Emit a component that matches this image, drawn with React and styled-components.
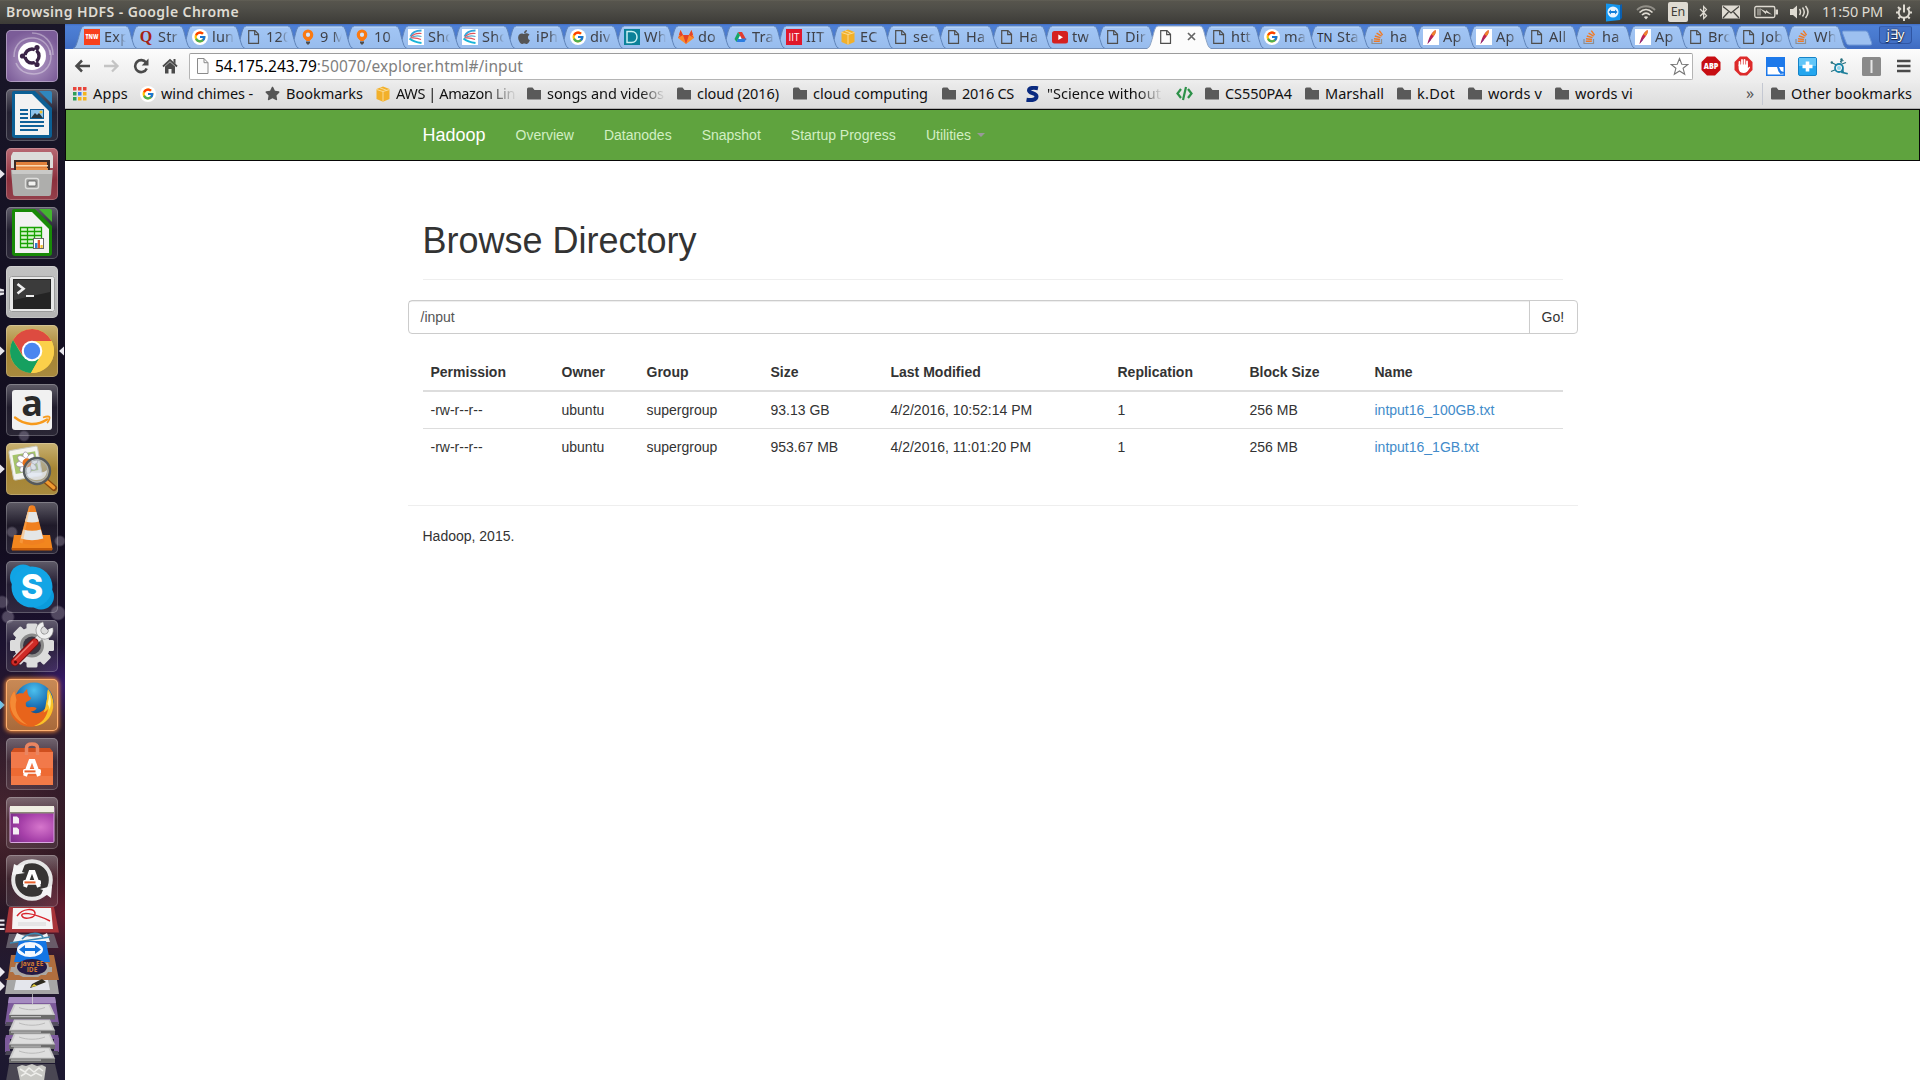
import React, { useLayoutEffect, useRef } from "react";
import styled, { createGlobalStyle, css } from "styled-components";
import { FcGoogle } from "react-icons/fc";
import { FaApple, FaBluetoothB, FaStar } from "react-icons/fa";

const UI_FONT = `"Noto Sans", "Open Sans", sans-serif`;
const PAGE_FONT = `"Liberation Sans", Arial, sans-serif`;

const GlobalStyle = createGlobalStyle`
  *, *::before, *::after { box-sizing: border-box; }
  html, body { margin: 0; padding: 0; }
  body { width: 1920px; height: 1080px; overflow: hidden; background: #fff; }
  svg { display: block; flex: none; }
`;

/* ---------- text fitted to a label width ---------- */

const Label = styled.span`
  display: inline-block;
  white-space: pre;
`;

function FitText({ width, children, className }) {
  const ref = useRef(null);
  useLayoutEffect(() => {
    const el = ref.current;
    el.style.letterSpacing = "0px";
    const natural = el.getBoundingClientRect().width;
    el.style.letterSpacing = `${(width - natural) / el.textContent.length}px`;
  }, [width, children]);
  return (
    <Label ref={ref} className={className}>
      {children}
    </Label>
  );
}

/* ---------- desktop frame ---------- */

const Desktop = styled.div`
  display: flex;
  flex-direction: column;
  width: 1920px;
  height: 1080px;
  overflow: hidden;
  font-family: ${UI_FONT};
`;

const TopPanel = styled.header`
  display: flex;
  align-items: center;
  justify-content: space-between;
  height: 24px;
  flex: none;
  padding: 0 8px 0 6px;
  color: #dfdbd2;
  background: linear-gradient(#66645a 0, #57554d 1px, #504f49 8px, #3c3b37 24px);
`;

const WindowTitle = styled.div`
  font-size: 14px;
  font-weight: 600;
  line-height: 22px;
`;

const Tray = styled.div`
  display: flex;
  align-items: center;
  height: 24px;
`;

const TrayItem = styled.div`
  display: flex;
  align-items: center;
  width: ${(p) => p.$w}px;
  height: 24px;
  font-size: 14.5px;
  line-height: 22px;
`;

const Clock = styled.div`
  width: 74px;
  font-size: 14.5px;
  line-height: 22px;
  padding-bottom: 2px;
`;

const Keyboard = styled.span`
  width: 20px;
  height: 20px;
  border-radius: 2px;
  background: #dfdbd2;
  color: #3f3e39;
  font-size: 12.5px;
  line-height: 20px;
  text-align: center;
`;

const Workspace = styled.div`
  display: flex;
  flex: 1;
  min-height: 0;
`;

/* ---------- launcher ---------- */

const LauncherBar = styled.nav`
  display: flex;
  flex-direction: column;
  width: 65px;
  flex: none;
  padding-top: 6px;
  overflow: hidden;
  background:
    radial-gradient(circle at 24px 412px, rgba(190, 180, 210, 0.3) 4px, transparent 6px),
    radial-gradient(circle at 60px 517px, rgba(190, 180, 200, 0.34) 4px, transparent 6px),
    radial-gradient(circle at 12px 508px, rgba(190, 180, 200, 0.3) 4px, transparent 6px),
    radial-gradient(circle at 2px 578px, rgba(190, 180, 200, 0.3) 5px, transparent 7px),
    radial-gradient(circle at 58px 589px, rgba(190, 180, 200, 0.34) 6px, transparent 8px),
    radial-gradient(circle at 8px 593px, rgba(190, 180, 200, 0.34) 5px, transparent 7px),
    radial-gradient(circle at 66px 660px, rgba(70, 30, 150, 0.6), transparent 40px),
    radial-gradient(circle at 66px 890px, rgba(140, 30, 50, 0.6), transparent 60px),
    radial-gradient(circle at 0 800px, rgba(100, 50, 60, 0.5), transparent 90px),
    linear-gradient(#191628 0, #141022 300px, #110c1c 500px, #1c1230 620px, #301c2c 720px, #2a141e 850px, #231a30 940px, #1c1830 100%);
`;

const Slot = styled.div`
  display: flex;
  align-items: center;
  height: ${(p) => p.$h || 52}px;
  margin-bottom: ${(p) => (p.$last ? 0 : 7)}px;
  flex: none;
`;

const Marks = styled.div`
  width: 6px;
  height: 52px;
  flex: none;
`;

const Tile = styled.div`
  display: flex;
  width: 52px;
  height: 52px;
  border-radius: 5px;
  flex: none;
  background: ${(p) => p.$bg || "linear-gradient(rgba(255,255,255,.32), rgba(255,255,255,.06) 45%, rgba(255,255,255,.1))"};
  box-shadow: inset 0 0 0 1px ${(p) => p.$edge || "rgba(255,255,255,.22)"}${(p) => (p.$glow ? ", 0 0 4px 1px #f08a3c" : "")};
`;

function Indicator({ kind, color = "#e8e6ec", right }) {
  return (
    <Marks>
      <svg width="6" height="52" viewBox="0 0 6 52">
        {kind === "arrow" && !right && <path d="M0 21.5 4.8 26 0 30.5z" fill={color} />}
        {kind === "arrow" && right && <path d="M6 21.5 1 26 6 30.5z" fill={color} />}
        {kind === "two" && <path d="M0 22.5 4 23.5v2H0zM0 26.500h4v2l-4 1z" fill={color} />}
      </svg>
    </Marks>
  );
}

const I = (props) => <svg width="52" height="52" viewBox="0 0 52 52" {...props} />;

const DashIcon = () => (
  <I>
    <g fill="none" stroke="#fff" strokeOpacity=".35" strokeWidth="1.500">
      <path d="M8 27c0-14 10-20 20-19s16 9 16 17" />
      <path d="M44 20c4 14-5 24-16 24S12 38 10 33" />
      <path d="M26 3c12 0 21 9 21 22" />
    </g>
    <circle cx="26" cy="26" r="14" fill="#fff" />
    <circle cx="26" cy="26" r="7" fill="none" stroke="#3a2346" strokeWidth="3.400" />
    <g stroke="#fff" strokeWidth="1.500">
      <path d="M14 26h7M32 15.500 28.500 22M32 36.500 28.500 30" />
    </g>
    <g fill="#3a2346">
      <circle cx="16.500" cy="26" r="2.600" />
      <circle cx="31" cy="17.500" r="2.600" />
      <circle cx="31" cy="34.500" r="2.600" />
    </g>
  </I>
);

function OfficeIcon({ color, light, sheet }) {
  return (
    <I>
      <path d="M8 2h21l17 17v27a3 3 0 0 1-3 3H9a3 3 0 0 1-3-3V4a2 2 0 0 1 2-2z" fill={color} />
      <path d="M9 5h17l17 17v24H9z" fill="#f2f2f2" />
      <path d="M33 2h11a2 2 0 0 1 2 2v11z" fill={light} />
      {!sheet && (
        <g>
          <path d="M14 21h8M14 25h8M14 29h8M14 33h24M14 37h24M14 41h18" stroke="#0f6199" strokeWidth="2" />
          <rect x="24" y="20" width="14" height="10" fill="#0f6199" />
          <rect x="25" y="21" width="12" height="8" fill="#8fc4ea" />
          <path d="M25 29l4-5 2 2 2-2 4 5z" fill="#26343c" />
          <circle cx="35" cy="23" r="1.500" fill="#f0c030" />
        </g>
      )}
      {sheet && (
        <g>
          <path d="M14.500 20.500h21v20h-21z" fill="#d9f5cf" stroke="#18a303" strokeWidth="1.300" />
          <path d="M14.500 24.500h21M14.500 28.500h21M14.500 32.500h21M14.500 36.500h21M21.500 20.500v20M28.500 20.500v20" stroke="#18a303" strokeWidth="1.300" />
          <rect x="27.500" y="31.500" width="10" height="10" fill="#fff" stroke="#666" />
          <path d="M29 36h2.500v5H29z" fill="#2f7ed0" />
          <path d="M31.700 33h2.300v8h-2.300z" fill="#e2562a" />
          <path d="M34.500 38h2.200v3h-2.200z" fill="#f0c030" />
        </g>
      )}
    </I>
  );
}

const FilesIcon = () => (
  <I>
    <path d="M7 4h38l2 4v12H5V8z" fill="#dcdcda" />
    <path d="M8 12h36v12H8z" fill="#3a2a26" />
    <path d="M10 14h31v10H10z" fill="#e0803a" />
    <path d="M10 17h32v1.500H10z" fill="#fbd9b0" />
    <path d="M10 20h32v5H10z" fill="#e98f47" />
    <path d="M5 22h42v-2l-2 26a2 2 0 0 1-2 2H9a2 2 0 0 1-2-2z" fill="#aeaeac" />
    <path d="M6 22h40l-.3 4H6.300z" fill="#c9c9c7" />
    <rect x="19.500" y="30.500" width="13" height="10" rx="2" fill="#9a9a98" stroke="#dededc" strokeWidth="1.500" />
    <rect x="22" y="33" width="8" height="5" rx="1" fill="#f2f2f0" stroke="#555" strokeWidth=".8" />
  </I>
);

const TerminalIcon = () => (
  <I>
    <rect x="3" y="10" width="46" height="36" rx="2" fill="#e8e8e8" />
    <rect x="3.500" y="10.500" width="45" height="35" rx="2" fill="none" stroke="#9b9b9b" />
    <rect x="7" y="13" width="38" height="30" fill="#242424" />
    <path d="M8 14h36v12L8 34z" fill="#3b3b3b" />
    <path d="M11.500 18l6 4.700-6 4.700" fill="none" stroke="#eee" strokeWidth="2.600" />
    <path d="M20 30h8" stroke="#eee" strokeWidth="2" />
  </I>
);

const ChromeIcon = () => (
  <I>
    <circle cx="26" cy="26" r="22" fill="#f9cd46" />
    <path d="M7 15A22 22 0 0 1 45.600 16H26L17 31z" fill="#dd4b40" />
    <path d="M7 15a22 22 0 0 0 18 33l9.500-17L26 36l-9.500-5z" fill="#16a060" />
    <path d="M26 16h19.600A22 22 0 0 1 25 48l9.600-17z" fill="#fbd04a" />
    <circle cx="26" cy="26" r="10.300" fill="#fff" />
    <circle cx="26" cy="26" r="8.200" fill="#4a86f0" />
  </I>
);

const AmazonIcon = () => (
  <I>
    <rect x="6" y="6" width="40" height="40" rx="3" fill="#f1f1f1" />
    <text x="26" y="32" textAnchor="middle" fontFamily="Open Sans, sans-serif" fontWeight="700" fontSize="36" fill="#2a2a2a">a</text>
    <path d="M9 33.500c10 8 22 8.500 32 2" fill="none" stroke="#f79a1c" strokeWidth="2.400" strokeLinecap="round" />
    <path d="M37 33.500c3-1.200 6-1.200 6.500-.5s-.5 4-2.500 6" fill="none" stroke="#f79a1c" strokeWidth="1.800" />
  </I>
);

const ViewerIcon = () => (
  <I>
    <g transform="rotate(-10 20 20)">
      <rect x="5" y="5" width="29" height="30" rx="2" fill="#f4f4f0" stroke="#c9c9bd" />
      <rect x="8" y="10" width="23" height="19" fill="#a5c46a" />
      <g fill="#fff" stroke="#8f7f9a" strokeWidth=".6">
        {[0, 45, 90, 135, 180, 225, 270, 315].map((a) => (
          <ellipse key={a} cx="21" cy="14.500" rx="3" ry="5.500" transform={`rotate(${a} 21 20)`} />
        ))}
      </g>
      <circle cx="21" cy="20" r="4.500" fill="#e8721c" />
    </g>
    <path d="M40 38l8 7" stroke="#8a4a10" strokeWidth="6" strokeLinecap="round" />
    <path d="M40 38l7.500 6.500" stroke="#f09a30" strokeWidth="3.600" strokeLinecap="round" />
    <circle cx="31" cy="28" r="13" fill="#b4c0cc" fillOpacity=".5" stroke="#55595c" strokeWidth="2.400" />
    <path d="M21 31c6-4 12 2 20-4 0 7-5 10-10 10s-9-2-10-6z" fill="#e9eef8" fillOpacity=".75" />
    <circle cx="31" cy="28" r="11" fill="none" stroke="#aab0b4" />
  </I>
);

const VlcIcon = () => (
  <I>
    <path d="M8 33h36l2.500 14a1 1 0 0 1-1 1h-39a1 1 0 0 1-1-1z" fill="#f2861e" />
    <path d="M6 46h40v2.500H6z" fill="#c85c08" />
    <path d="M23 4.500q3-2.500 6 0L38.500 40q-12.500 6-25 0z" fill="#f08020" />
    <path d="M21.600 10h8.800l2.600 9.500q-7 2-14 0z" fill="#e4e6e6" />
    <path d="M17.200 27.500q9 2.500 17.600 0l2.500 9q-11.300 3.500-22.600 0z" fill="#e4e6e6" />
    <path d="M24.500 3.500l-8 38q-2-.5-3-1.500L23 4.500z" fill="#ffb25c" fillOpacity=".45" />
  </I>
);

const SkypeIcon = () => (
  <I>
    <circle cx="17" cy="16.500" r="13" fill="#10a4e4" />
    <circle cx="35" cy="35.500" r="13" fill="#0a9bdc" />
    <circle cx="26" cy="26" r="20.500" fill="#12a5e5" />
    <text x="26" y="38" textAnchor="middle" fontFamily="Inter, sans-serif" fontWeight="800" fontSize="34" fill="#fff">S</text>
  </I>
);

const SettingsIcon = () => (
  <I>
    <g fill="#dcdcdc">
      {[0, 45, 90, 135].map((a) => (
        <rect key={a} x="20.500" y="3.500" width="11" height="44" rx="1.500" transform={`rotate(${a} 26 25.500)`} />
      ))}
      <circle cx="26" cy="25.500" r="18" />
    </g>
    <circle cx="26" cy="25.500" r="12" fill="#8a8a8a" />
    <circle cx="26" cy="25.500" r="9" fill="#3a3440" />
    <path d="M27 24l10-10" stroke="#e4e4e4" strokeWidth="5.500" />
    <path d="M44.500 8.500a6.200 6.200 0 1 1-7-4.200" fill="none" stroke="#8c8c8c" strokeWidth="5.600" />
    <path d="M44.500 8.500a6.200 6.200 0 1 1-7-4.200" fill="none" stroke="#efefef" strokeWidth="4.200" />
    <path d="M9 42L28.500 22.500" stroke="#7d0f10" strokeWidth="8.500" strokeLinecap="round" />
    <path d="M9 42L28.500 22.500" stroke="#cf2b27" strokeWidth="6.500" strokeLinecap="round" />
    <path d="M8.500 40L27 21.500" stroke="#ee7b70" strokeWidth="1.500" />
    <circle cx="9.500" cy="42" r="1.500" fill="#540808" />
  </I>
);

const FirefoxIcon = () => (
  <I>
    <defs>
      <radialGradient id="globe" cx=".5" cy=".2" r=".8">
        <stop offset="0" stopColor="#4cc0ee" />
        <stop offset=".5" stopColor="#1d74b8" />
        <stop offset="1" stopColor="#0d3467" />
      </radialGradient>
    </defs>
    <circle cx="28" cy="23" r="19.500" fill="url(#globe)" />
    <path d="M44 14c5 9 4 20-2 26-8 9-22 10-30 4C4 38 2 29 4.500 19c1-3 2-5 4-7l.7 4c3-2 6-2 8-1.500 1.500-2 2.500-3.500 4-4.500 0 3 .5 5 2 7.500 1.500.3 2 1.500 1.500 2.500-1 2-4 2-5 4 .5 2-.5 3 1.500 4 3 1 6-1 9.500 1-1 2-3 3.500-6 3.500 5 3.500 12 1 15-4 3-6 2-9 4.300-14.500z" fill="#e8641b" />
    <path d="M42 10c7 9 7 21 1 29-5 6-10 8-15 8 8-3 13-9 14-17-1.500 2-3 3-4.500 3.500 3-6 2-10 3.500-13.500 0-4 0-7 1-10z" fill="#f9c22a" />
    <path d="M42.500 13c3 6 3 12 1 18 0-3-1-4-2-6 1-4 2-8 1-12z" fill="#fff3a0" />
    <path d="M4.500 19c-2 12 4 23 17 27-9-6-14-15-11-25l-2-9c-2 2-3 4-4 7z" fill="#f58a35" />
  </I>
);

const CartLetter = ({ y = 0 }) => (
  <g transform={`translate(0 ${y})`}>
    <path d="M19 38 24.500 23h3L33 38" fill="none" stroke="#fff" strokeWidth="4" />
    <rect x="17" y="31" width="18" height="4.800" rx="1.500" fill="#fff" />
    <rect x="18.500" y="32.400" width="11" height="2" fill="#e8602c" />
  </g>
);

const SoftwareIcon = () => (
  <I>
    <path d="M5 14h42v33H5z" fill="#ee6a33" />
    <path d="M5 14h42v16H5z" fill="#f2794a" />
    <path d="M5 38h42v9H5z" fill="#f58655" fillOpacity=".6" />
    <path d="M5 14l3-4h36l3 4z" fill="#cf4f1f" />
    <path d="M20.500 17V10c0-3 2-4 5.500-4s5.500 1 5.500 4v7" fill="none" stroke="#e98561" strokeWidth="3.500" />
    <CartLetter />
  </I>
);

const DesktopIcon = () => (
  <I>
    <defs>
      <radialGradient id="wall" cx=".7" cy=".5" r=".8">
        <stop offset="0" stopColor="#d676cc" />
        <stop offset=".6" stopColor="#a53fa8" />
        <stop offset="1" stopColor="#80308e" />
      </radialGradient>
    </defs>
    <rect x="3.500" y="9" width="45" height="37" rx="2" fill="#d8a8e0" />
    <rect x="4.500" y="15" width="43" height="30" fill="url(#wall)" />
    <path d="M4 9h44v6H4z" fill="#efeee2" />
    <path d="M4 15h44v1.500H4z" fill="#8b8a78" />
    <path d="M7 19.500h4l2 2v5H7zM7 30.500h4l2 2v5H7z" fill="#f4eef4" />
  </I>
);

const UpdaterIcon = () => (
  <I>
    <circle cx="26" cy="25" r="18" fill="#363433" />
    <circle cx="26" cy="25" r="18.800" fill="none" stroke="#e6e6e6" strokeWidth="4" />
    <path d="M6 20 8 9l4 2 7-2-3 8 3 1z" fill="#f4f4f4" />
    <path d="M46 31l-1 12-4-3-7 2 3-7-3-1z" fill="#f4f4f4" />
    <CartLetter y={-6} />
  </I>
);

const Drive = ({ y }) => (
  <g transform={`translate(0 ${y})`}>
    <path d="M14 0h36l5 11v4H9v-4z" fill="#c9c9c9" />
    <path d="M15.500 1h33l4 9h-41z" fill="#dedede" />
    <path d="M9 11h46v4.500H9z" fill="#6b6b6b" />
    <path d="M11 12h30v1.200H11z" fill="#bdbdbd" />
    <path d="M19 3.500c8 3 18 3 26 0" fill="none" stroke="#bbb" />
  </g>
);

const FoldedStack = () => (
  <svg width="65" height="175" viewBox="0 905 65 175">
    <path d="M9 906h45l5 25.500H5z" fill="#a8353a" />
    <path d="M13 907h38l2 21H12z" fill="#f5f5f5" />
    <path d="M17 915c6-8 17-8 18-3s-11 7-13 3 10-4 28 5" fill="none" stroke="#d8242c" strokeWidth="1.500" />
    <path d="M18 922h28M18 924h28" stroke="#d4d4d4" strokeWidth=".9" />
    <path d="M0 918.500h4.500v2H0zM0 922.700h4.500v2H0zM0 927h4.500v2H0z" fill="#eceaf0" />
    <path d="M9 933h45l4.500 14H6z" fill="#77727c" fillOpacity=".75" />
    <path d="M17 932c10 5 22 5 30 0l3 9H13z" fill="#eef2f5" />
    <path d="M22 938c7-7 17-7 21-2M10 942l40-6" fill="none" stroke="#3b87b0" strokeWidth="1.700" />
    <path d="M8 977l3-23h43l5 25H5z" fill="#b06e3e" />
    <path d="M19 940h27l4 21H14z" fill="#1476e4" />
    <ellipse cx="30" cy="948.500" rx="13" ry="7.500" fill="#f4f9ff" />
    <path d="M19 948.500l6-4.500v3h10v-3l6 4.500-6 4.500v-3H25v3z" fill="#1273dd" />
    <path d="M11 966h4l1-4h4l3-2h18l3 2h4l1 4h3v5h-4l-2 3h-5l-3 2H23l-4-2h-4l-2-3h-3z" fill="#aaa7a3" />
    <ellipse cx="32" cy="966" rx="15" ry="8" fill="#241a44" />
    <text x="32" y="964.500" textAnchor="middle" fontFamily="Open Sans, sans-serif" fontWeight="700" fontSize="6.500" fill="#d07a35">Java EE</text>
    <text x="32" y="970.500" textAnchor="middle" fontFamily="Open Sans, sans-serif" fontWeight="700" fontSize="6.500" fill="#d07a35">IDE</text>
    <path d="M0 966l5 5-5 5zM0 980l5 5-5 5z" fill="#eceaf0" />
    <path d="M7 979h50l2 14H5z" fill="#a6a6a6" />
    <path d="M16 979h32l2 10H14z" fill="#e4e6ec" />
    <path d="M30 987l2-4 10-5 4 3-10 4z" fill="#2d2a20" />
    <path d="M31 986l3-3 3 2z" fill="#e8d23a" />
    <path d="M9 996h46l4 27H5z" fill="#7d5b9c" />
    <path d="M9 996h46l1 6H8z" fill="#a58bc0" />
    <path d="M32.500 993v14" stroke="#ddd" strokeOpacity=".7" />
    <Drive y={1003} />
    <path d="M6 1021h52l1 4H5z" fill="#544e60" />
    <Drive y={1018.500} />
    <path d="M6 1034h52l1 4H5z" fill="#7d5b9c" />
    <path d="M5 1037h5v14H5zM54 1037h5v14h-5z" fill="#7d5b9c" />
    <Drive y={1032.500} />
    <path d="M6 1050h52l1 4H5z" fill="#4a4656" />
    <Drive y={1046.500} />
    <path d="M9 1063h46l4 17H6z" fill="#4a4753" />
    <path d="M17 1066l5-2 4 1 6-2 5 2 5-1 4 2-2 14H20z" fill="#c9c9c5" />
    <path d="M20 1068l5 3 4-4 5 4 5-4 4 3M21 1075l5-3 5 3 5-3 6 3" fill="none" stroke="#efefec" strokeWidth="1.500" />
  </svg>
);

const gold = "linear-gradient(#c9b273, #a68432 50%, #a88a3f)";

const apps = [
  { icon: <DashIcon />, bg: "radial-gradient(circle at 50% 60%, #b9a3cb, #7b5c98 75%)", edge: "rgba(255,255,255,.35)" },
  { icon: <OfficeIcon color="#0b5f95" light="#2f86bd" /> },
  { icon: <FilesIcon />, bg: "linear-gradient(#b96a74, #8c2f3c 60%, #93404b)", marks: "arrow" },
  { icon: <OfficeIcon color="#188a07" light="#43b52f" sheet /> },
  { icon: <TerminalIcon />, bg: "linear-gradient(#c2c2c2, #b3b3b3)", marks: "two" },
  { icon: <ChromeIcon />, bg: gold, marks: "arrow", active: true },
  { icon: <AmazonIcon /> },
  { icon: <ViewerIcon />, bg: gold, marks: "arrow" },
  { icon: <VlcIcon /> },
  { icon: <SkypeIcon /> },
  { icon: <SettingsIcon /> },
  { icon: <FirefoxIcon />, bg: "linear-gradient(#c98a56, #a8693a)", edge: "#ffb070", glow: true, marks: "arrow", markColor: "#6cc4ee" },
  { icon: <SoftwareIcon /> },
  { icon: <DesktopIcon />, h: 51 },
  { icon: <UpdaterIcon />, h: 51 },
];

function Launcher() {
  return (
    <LauncherBar>
      {apps.map((a, i) => (
        <Slot key={i} $h={a.h} $last={i === apps.length - 1}>
          <Indicator kind={a.marks} color={a.markColor} />
          <Tile $bg={a.bg} $edge={a.edge} $glow={a.glow}>
            {a.icon}
          </Tile>
          {a.active && <Indicator kind="arrow" right />}
        </Slot>
      ))}
      <FoldedStack />
    </LauncherBar>
  );
}

/* ---------- favicons ---------- */

const F = (props) => <svg width="16" height="16" viewBox="0 0 16 16" {...props} />;

const PageFav = () => (
  <F>
    <path d="M2.700 1.700h6.300l3.500 3.600v9H2.700z" fill="none" stroke="#4e4e4e" strokeWidth="1.200" />
    <path d="M8.700 1.700v4h3.800" fill="none" stroke="#4e4e4e" strokeWidth="1.200" />
  </F>
);
const TnwFav = () => (
  <F>
    <path d="M0 0h16v16H0z" fill="#f8401c" />
    <text x="1.500" y="10.300" fontFamily="Open Sans, sans-serif" fontWeight="800" fontSize="6" textLength="13" lengthAdjust="spacingAndGlyphs" fill="#fff">TNW</text>
  </F>
);
const QFav = () => (
  <F>
    <text x="8" y="13" textAnchor="middle" fontFamily="Liberation Serif, serif" fontWeight="700" fontSize="16" fill="#a62312">Q</text>
  </F>
);
const GoogleFav = () => (
  <F>
    <circle cx="8" cy="8" r="8" fill="#fff" />
    <FcGoogle x="1.500" y="1.500" size={13} />
  </F>
);
const PinFav = () => (
  <F>
    <circle cx="8" cy="5.700" r="3.700" fill="none" stroke="#fb7a12" strokeWidth="3.200" />
    <path d="M3.500 8.500h9L9.500 12h-3z" fill="#fb7a12" />
    <circle cx="8" cy="5.700" r="2" fill="#d9e6f7" />
    <path d="M6 12.500h4v1.500l-2 2-2-2z" fill="#4d4d4d" />
  </F>
);
const WingFav = () => (
  <F>
    <path d="M0 0h16v16H0z" fill="#fff" />
    <g fill="none" strokeWidth="1.200">
      <path d="M13.500 1.500C8 1.500 4 3.500 2.500 7.500" stroke="#35a7dc" strokeWidth="2" />
      <path d="M13.500 4.500C9 4 5 5.500 3 8" stroke="#e2525a" />
      <path d="M13.500 7.500C10 6.500 6 7 3 8.500" stroke="#5aaed0" />
      <path d="M13 10.500C10 9 6 8.500 2 9" stroke="#e2525a" />
      <path d="M13.500 14C9 13.500 5 12.500 1.500 9.500" stroke="#18b4d8" strokeWidth="2" />
    </g>
  </F>
);
const AppleFav = () => <FaApple size={16} color="#555" />;
const DFav = () => (
  <F>
    <path d="M0 0h16v16H0z" fill="#0b8199" />
    <path d="M3 2.500h4.500c7.300 0 7.300 11 0 11H3z" fill="none" stroke="#c9f0f2" strokeWidth="1.500" />
  </F>
);
const GitlabFav = () => (
  <F>
    <path d="M8 15 0 9l2.500-8L5 6h6l2.500-5L16 9z" fill="#fc8a2a" />
    <path d="M8 15 5 6h6z" fill="#e24329" />
    <path d="M0 9l2.500-3H5zM16 9l-2.500-3H11zM2.500 1 5 6H1zM13.500 1 11 6h4z" fill="#e24329" />
  </F>
);
const DriveFav = () => (
  <F>
    <path d="M6 3h4l4.500 8h-4z" fill="#e33b2e" />
    <path d="M6 3l2 3.500L4.500 13 2.500 10z" fill="#16a765" />
    <path d="M6 9.500h8.500L12.500 13h-8z" fill="#2b7de0" />
    <path d="M8 7l1.500 3h-3z" fill="#fff" />
  </F>
);
const IitFav = () => (
  <F>
    <path d="M0 0h16v16H0z" fill="#e0172b" />
    <text x="2.500" y="12" fontFamily="Open Sans, sans-serif" fontSize="11" textLength="11" lengthAdjust="spacingAndGlyphs" fill="#fff">IIT</text>
  </F>
);
const BoxFav = () => (
  <F>
    <path d="M1.500 3 8 .5 14.500 3v10L8 15.800 1.500 13z" fill="#f2b02a" />
    <path d="M1.500 3.500 8 5.500l6.500-2M8 5.500v10M5 1.800l6.500 2.500" fill="none" stroke="#fbe0a0" strokeWidth=".9" />
  </F>
);
const TubeFav = () => (
  <F>
    <rect x="0" y="2" width="16" height="12.500" rx="2.500" fill="#d5201f" />
    <path d="M6.300 5.500v5.600L11 8.300z" fill="#fff" />
  </F>
);
const TnFav = () => (
  <F>
    <text x="0" y="13" fontFamily="Noto Sans, sans-serif" fontSize="13" textLength="15.500" lengthAdjust="spacingAndGlyphs" fill="#2c2c34">TN</text>
  </F>
);
const StackFav = () => (
  <F>
    <path d="M2 10v4.500h9.500V10" fill="none" stroke="#8d8f93" strokeWidth="1.200" />
    <path d="M3.800 12.300h6M4 9.800l6 .7M4.800 7l5.700 1.600M6.600 4.200l5 3M9.300 1.700l3.300 4.500" stroke="#f07a25" strokeWidth="1.400" />
  </F>
);
const FeatherFav = () => (
  <F>
    <path d="M0 0h16v16H0z" fill="#fff" />
    <path d="M12.500 1c1 3-1.500 6.500-6 11.500L4.500 15c1-5 3-11 8-14z" fill="#c3244c" />
    <path d="M12.500 1c.8 2.500-.6 4.600-2 6L8.500 5.500C9.500 3.500 11 2 12.500 1z" fill="#f0862a" />
    <path d="M7.500 8 4.500 15l3-3.500z" fill="#7c2a86" />
  </F>
);

/* ---------- browser chrome ---------- */

const Browser = styled.main`
  display: flex;
  flex-direction: column;
  flex: 1;
  min-width: 0;
  background: #fff;
`;

const TabStrip = styled.div`
  display: flex;
  align-items: flex-end;
  height: 25px;
  flex: none;
  padding-left: 8px;
  background: linear-gradient(#3f6cc4 0, #4e80d6 2px, #4878cd 14px, #3f6cc2 24px);
  isolation: isolate;
`;

const TabBox = styled.div`
  display: grid;
  width: 64px;
  height: 24px;
  flex: none;
  margin-right: ${(p) => -64 + p.$pitch}px;
  z-index: ${(p) => p.$z};
`;

const cell = css`
  grid-area: 1 / 1;
`;

const TabShape = styled.svg`
  ${cell}
`;

const TabContent = styled.div`
  ${cell}
  display: flex;
  align-items: center;
  padding: 0 0 1px 11px;
`;

const TabTitle = styled.span`
  width: 22px;
  margin: 0 0 2px 4px;
  overflow: hidden;
  white-space: nowrap;
  font-size: 14.5px;
  letter-spacing: 0.2px;
  line-height: 20px;
  color: #3f4148;
  mask-image: linear-gradient(90deg, #000 13px, transparent 22px);
`;

const CloseMark = styled.svg`
  margin-left: 13px;
`;

const tabs = [
  ["Exp", TnwFav], ["Str", QFav], ["lun", GoogleFav], ["120", PageFav], ["9 M", PinFav],
  ["10", PinFav], ["Sho", WingFav], ["Sho", WingFav], ["iPh", AppleFav], ["div", GoogleFav],
  ["Wh", DFav], ["do", GitlabFav], ["Tra", DriveFav], ["IIT", IitFav], ["EC", BoxFav],
  ["sec", PageFav], ["Ha", PageFav], ["Ha", PageFav], ["tw", TubeFav], ["Dir", PageFav],
  ["", PageFav, true], ["htt", PageFav], ["ma", GoogleFav], ["Sta", TnFav], ["ha", StackFav],
  ["Ap", FeatherFav], ["Ap", FeatherFav], ["All", PageFav], ["ha", StackFav], ["Ap", FeatherFav],
  ["Bro", PageFav], ["Job", PageFav], ["Wh", StackFav],
];

function Tab({ title, Icon, active, index }) {
  const outline = "M0 23.500C3 22.500 3.500 19 5 14.500S7.500 1 11 1h42c3.500 0 4.500 9 6 13.500s2 8 5 9";
  return (
    <TabBox $pitch={index < 14 ? 54 : 53} $z={active ? 50 : 40 - index}>
      <TabShape width="64" height="24" viewBox="0 0 64 24">
        <path d={`${outline}v.5H0z`} fill={active ? "#fcfcfc" : "url(#tabFill)"} />
        <path d={outline} fill="none" stroke={active ? "#8da4c4" : "#5f83b8"} />
        {!active && <path d="M11 2.200h42" stroke="#bcd7fb" />}
        {!active && <path d="M1 23.500h62" stroke="#7791b8" />}
      </TabShape>
      <TabContent>
        <Icon />
        {active ? (
          <CloseMark width="9" height="9" viewBox="0 0 9 9">
            <path d="M1 1l7 7M8 1 1 8" stroke="#666" strokeWidth="1.700" />
          </CloseMark>
        ) : (
          <TabTitle>{title}</TabTitle>
        )}
      </TabContent>
    </TabBox>
  );
}

const NewTab = styled.svg`
  margin: 0 5px 3px 5px;
`;

const UserBadge = styled.div`
  width: 33px;
  height: 18px;
  margin: 0 0 5px 1px;
  border: 1px solid #2f55a3;
  border-top-color: #3a62b4;
  border-radius: 2px 2px 4px 4px;
  background: #4270c6;
  color: #fff;
  font-size: 13px;
  line-height: 15px;
  text-align: center;
  text-shadow: 0 0 2px #000, 0 1px 1px #1b2c55;
`;

const Toolbar = styled.div`
  display: flex;
  align-items: center;
  height: 34px;
  flex: none;
  padding: 0 9px;
  background: linear-gradient(#fcfcfc, #ececec);
`;

const NavIcon = styled.div`
  display: flex;
  align-items: center;
  width: ${(p) => p.$w}px;
`;

const Omnibox = styled.div`
  display: flex;
  align-items: center;
  width: 1505px;
  height: 27px;
  padding: 0 3px 0 5px;
  border: 1px solid #b4b4b4;
  border-top-color: #9c9c9c;
  border-radius: 2px;
  background: #fff;
`;

const Url = styled.div`
  flex: 1;
  margin-left: 4px;
  font-size: 15.5px;
  line-height: 24px;
  color: #7f7f7f;
  b { font-weight: 400; color: #000; }
`;

const Extensions = styled.div`
  display: flex;
  align-items: center;
  margin-left: 8px;
`;

const ExtSlot = styled.div`
  display: flex;
  width: ${(p) => p.$w || 32}px;
`;

const BookmarkBar = styled.div`
  display: flex;
  align-items: flex-start;
  height: 26px;
  flex: none;
  padding: 0 8px;
  border-bottom: 1px solid #b0b0b0;
  background: linear-gradient(#ebebeb, #dcdcdc);
  font-size: 14.5px;
  line-height: 20px;
  color: #111;
`;

const Bookmark = styled.div`
  display: flex;
  align-items: center;
  height: 20px;
  width: ${(p) => p.$w}px;
  flex: none;
`;

const BookmarkIcon = styled.div`
  display: flex;
  width: ${(p) => p.$w || 20}px;
  flex: none;
  padding-top: 1px;
`;

const Faded = styled.span`
  display: inline-flex;
  ${(p) => p.$fade && css`mask-image: linear-gradient(90deg, #000 ${p.$fade}%, rgba(0, 0, 0, 0.1) 99%);`}
`;

const Overflow = styled.div`
  margin-left: auto;
  width: 16px;
  color: #555;
  font-size: 16px;
`;

const Divider = styled.div`
  width: 1px;
  height: 22px;
  margin-right: 8px;
  background: #c4c8d2;
`;

const Folder = () => (
  <svg width="14" height="13" viewBox="0 0 14 13">
    <path d="M0 2a1.500 1.500 0 0 1 1.500-1.500h4L7.500 3H14v9.500H1A1 1 0 0 1 0 11.500z" fill="#5a5a5a" />
  </svg>
);

const AppsGrid = () => (
  <svg width="14" height="14" viewBox="0 0 14 14">
    {["#e8443a", "#e8443a", "#e8443a", "#2f9e58", "#3d7ff0", "#f4b41c", "#2f9e58", "#f4b41c", "#f4b41c"].map((c, i) => (
      <rect key={i} x={(i % 3) * 5} y={Math.floor(i / 3) * 5} width="3.500" height="3.500" fill={c} />
    ))}
  </svg>
);

const CodeMark = () => (
  <svg width="17" height="15" viewBox="0 0 17 15">
    <path d="M5 3 1.500 7.500 5 12M12 3l3.500 4.500L12 12M10 1 7 14" fill="none" stroke="#2c9148" strokeWidth="2.200" />
  </svg>
);

const SwirlS = () => (
  <svg width="15" height="16" viewBox="0 0 15 16">
    <path d="M13 2.300C9 1.500 4 1.500 4 4.500S11.500 7 11.500 10.500 6 14.500 1.500 13.700" fill="none" stroke="#0a2a80" strokeWidth="4" />
  </svg>
);

const bookmarks = [
  { text: "Apps", w: 67, tw: 35, icon: <AppsGrid /> },
  { text: "wind chimes -", w: 125, tw: 92, iw: 21, icon: <GoogleFav /> },
  { text: "Bookmarks", w: 110, tw: 77, iw: 21, icon: <FaStar size={15} color="#555" /> },
  { text: "AWS | Amazon Lin", w: 152, tw: 119, iw: 21, fade: 76, icon: <BoxFav /> },
  { text: "songs and videos", w: 150, tw: 117, fade: 80, icon: <Folder /> },
  { text: "cloud (2016)", w: 116, tw: 82, icon: <Folder /> },
  { text: "cloud computing", w: 149, tw: 115, icon: <Folder /> },
  { text: "2016 CS", w: 83, tw: 52, icon: <Folder /> },
  { text: "\"Science without", w: 151, tw: 114, iw: 22, fade: 80, icon: <SwirlS /> },
  { text: "", w: 29, tw: 0, icon: <CodeMark /> },
  { text: "CS550PA4", w: 100, tw: 67, icon: <Folder /> },
  { text: "Marshall", w: 92, tw: 59, icon: <Folder /> },
  { text: "k.Dot", w: 71, tw: 38, icon: <Folder /> },
  { text: "words v", w: 87, tw: 54, icon: <Folder /> },
  { text: "words vi", w: 90, tw: 58, icon: <Folder /> },
];

function BrowserChrome() {
  return (
    <>
      <TabStrip>
        <svg width="0" height="0">
          <defs>
            <linearGradient id="tabFill" x1="0" y1="0" x2="0" y2="1">
              <stop offset="0" stopColor="#a3c6f5" />
              <stop offset="1" stopColor="#97bced" />
            </linearGradient>
          </defs>
        </svg>
        {tabs.map(([title, Icon, active], i) => (
          <Tab key={i} index={i} title={title} Icon={Icon} active={active} />
        ))}
        <NewTab width="32" height="16" viewBox="0 0 32 16">
          <path d="M2.500 1h22q2 0 2.700 2l3.500 10q.6 2-1.500 2H8q-2 0-2.700-2L1.500 3Q1 1 2.500 1z" fill="#9dc0f0" stroke="#6f97d6" />
        </NewTab>
        <UserBadge>j∃y</UserBadge>
      </TabStrip>
      <Toolbar>
        <NavIcon $w={30}>
          <svg width="16" height="16" viewBox="0 0 16 16"><path d="M8 2.500 2.500 8 8 13.500M2.500 8H16" fill="none" stroke="#4a4a4a" strokeWidth="2.500" /></svg>
        </NavIcon>
        <NavIcon $w={29}>
          <svg width="16" height="16" viewBox="0 0 16 16"><path d="M8 2.500 13.500 8 8 13.500M13.500 8H0" fill="none" stroke="#c4c4c4" strokeWidth="2.300" /></svg>
        </NavIcon>
        <NavIcon $w={29}>
          <svg width="17" height="16" viewBox="0 0 17 16">
            <path d="M13 4.500A6 6 0 1 0 13.700 10.500" fill="none" stroke="#4a4a4a" strokeWidth="2.600" />
            <path d="M15.500.5V7.500H8.700z" fill="#4a4a4a" />
          </svg>
        </NavIcon>
        <NavIcon $w={27}>
          <svg width="16" height="16" viewBox="0 0 16 16">
            <path d="M1 8.500 8 2l7 6.500" fill="none" stroke="#4a4a4a" strokeWidth="1.800" />
            <path d="M3 8.500 8 4l5 4.500V15.500H9.500V11h-3v4.500H3zM11.500 1h2v5l-2-2z" fill="#4a4a4a" />
          </svg>
        </NavIcon>
        <Omnibox>
          <svg width="16" height="18" viewBox="0 0 16 18">
            <path d="M2.500 1.500h6.500l4 4.200v10.800H2.500z" fill="#fbfbfb" stroke="#8a8a8a" />
            <path d="M9 1.500v4.200h4" fill="none" stroke="#8a8a8a" />
          </svg>
          <Url>
            <FitText width={308}><b>54.175.243.79</b>:50070/explorer.html#/input</FitText>
          </Url>
          <svg width="19" height="19" viewBox="0 0 19 19">
            <path d="M9.500 1.500l2.300 5.700 6 .3-4.700 3.800 1.600 6L9.500 14l-5.200 3.300 1.600-6L1.200 7.500l6-.3z" fill="#fff" stroke="#777" strokeWidth="1.100" />
          </svg>
        </Omnibox>
        <Extensions>
          <ExtSlot $w={33}>
            <svg width="20" height="20" viewBox="0 0 20 20">
              <path d="M6 .5h8L19.500 6v8L14 19.500H6L.5 14V6z" fill="#c70d12" />
              <text x="2.700" y="13.300" fontFamily="Open Sans, sans-serif" fontWeight="800" fontSize="9" textLength="14.600" lengthAdjust="spacingAndGlyphs" fill="#fff">ABP</text>
            </svg>
          </ExtSlot>
          <ExtSlot>
            <svg width="19" height="20" viewBox="0 0 19 20">
              <path d="M6 .5h7L18.500 6v8L13 19.500H6L.5 14V6z" fill="#dd2a2a" />
              <path d="M5.500 9.500V6M8 9V4M10.500 9V4M13 9.500V5.500" stroke="#fff" strokeWidth="1.800" strokeLinecap="round" />
              <path d="M4.600 8.500h9.300V12l1.800-1.500q.8 1-.6 2.500c-1.500 2.500-3 4-5.500 4-4 0-5-3-5-5.500z" fill="#fff" />
            </svg>
          </ExtSlot>
          <ExtSlot>
            <svg width="19" height="19" viewBox="0 0 19 19">
              <path d="M0 0h19v19H0z" fill="#1d79ea" />
              <path d="M1.500 10H11l1.500 4.500 2 2.500 3-.5v1H1.500zM13 10h4.500v5l-2.500-1z" fill="#fff" />
            </svg>
          </ExtSlot>
          <ExtSlot>
            <svg width="19" height="19" viewBox="0 0 19 19">
              <rect x=".5" y=".5" width="18" height="18" rx="1.500" fill="#24a6ee" stroke="#1583c8" />
              <path d="M1 1h17v8H1z" fill="#62c6f8" />
              <path d="M9.500 4.500v10M4.500 9.500h10" stroke="#fff" strokeWidth="3.600" />
            </svg>
          </ExtSlot>
          <ExtSlot>
            <svg width="19" height="19" viewBox="0 0 19 19">
              <path d="M1.500 5.500 6.500 8M11 6.500l.5-4M1 14.500l5-2M12 7l4-1.500M10 4.500l3.500-1" stroke="#27707f" strokeWidth="1.200" />
              <circle cx="9" cy="11" r="4" fill="none" stroke="#1a86a8" strokeWidth="1.800" />
              <circle cx="9" cy="11" r="2" fill="#8fd4ea" />
              <path d="M12.500 9 14 15l4 1-.5 1.500L11 16z" fill="#1d7d98" />
              <circle cx="11.500" cy="2.500" r="1.200" fill="#27707f" />
              <circle cx="1.800" cy="5.500" r="1.200" fill="#27707f" />
            </svg>
          </ExtSlot>
          <ExtSlot $w={35}>
            <svg width="19" height="19" viewBox="0 0 19 19">
              <rect width="19" height="19" rx="1.500" fill="#8a8a8a" />
              <path d="M9.500 3v13" stroke="#e6e6e6" strokeWidth="2" />
            </svg>
          </ExtSlot>
          <svg width="14" height="14" viewBox="0 0 14 14">
            <path d="M0 2h13.500M0 7h13.500M0 12h13.500" stroke="#4a4a4a" strokeWidth="2.700" />
          </svg>
        </Extensions>
      </Toolbar>
      <BookmarkBar>
        {bookmarks.map((b, i) => (
          <Bookmark key={i} $w={b.w}>
            <BookmarkIcon $w={b.iw}>{b.icon}</BookmarkIcon>
            {b.text && <Faded $fade={b.fade}><FitText width={b.tw}>{b.text}</FitText></Faded>}
          </Bookmark>
        ))}
        <Overflow>»</Overflow>
        <Divider />
        <Bookmark $w={141}>
          <BookmarkIcon $w={20}><Folder /></BookmarkIcon>
          <FitText width={121}>Other bookmarks</FitText>
        </Bookmark>
      </BookmarkBar>
    </>
  );
}

/* ---------- Hadoop page ---------- */

const Page = styled.div`
  flex: 1;
  font-family: ${PAGE_FONT};
  font-size: 14px;
  line-height: 20px;
  color: #333;
  background: #fff;
`;

const Container = styled.div`
  width: 1170px;
  margin: 0 auto;
  padding: 0 15px;
`;

const Navbar = styled.nav`
  height: 52px;
  border: 1px solid #080808;
  background: #5fa33e;
`;

const NavRow = styled(Container)`
  display: flex;
`;

const Brand = styled.a`
  margin-left: -15px;
  padding: 15px;
  font-size: 18px;
  color: #fff;
`;

const NavLink = styled.a`
  display: flex;
  align-items: center;
  padding: 15px;
  color: #d2efc3;
`;

const Caret = styled.span`
  width: 0;
  height: 0;
  margin-left: 6px;
  border: 4px solid transparent;
  border-top-color: #999;
  border-bottom: 0;
`;

const PageHeader = styled.div`
  height: 119px;
  padding-top: 60.4px;
  border-bottom: 1px solid #eee;
`;

const Heading = styled.h1`
  margin: 0;
  font-size: 36px;
  font-weight: 500;
  line-height: 39.6px;
`;

const PathForm = styled.div`
  display: flex;
  height: 34px;
  margin: 20px -15px;
  border: 1px solid #ccc;
  border-radius: 4px;
`;

const PathInput = styled.div`
  flex: 1;
  padding: 6px 12px;
  color: #555;
  box-shadow: inset 0 1px 1px rgba(0, 0, 0, 0.075);
`;

const GoButton = styled.div`
  width: 48px;
  padding: 6px 0 6px 12px;
  border-left: 1px solid #ccc;
`;

const FileTable = styled.table`
  width: 1140px;
  table-layout: fixed;
  border-collapse: separate;
  border-spacing: 0;
  th, td { padding: 8px; text-align: left; white-space: nowrap; }
  th { height: 38px; border-bottom: 2px solid #ddd; }
  td { height: 36px; }
  tr + tr td { height: 37px; border-top: 1px solid #ddd; }
`;

const Col = styled.col`
  width: ${(p) => p.$w}px;
`;

const FileLink = styled.a`
  color: #428bca;
`;

const Footer = styled.footer`
  margin: 40px -15px 0;
  padding: 20px 15px;
  border-top: 1px solid #eee;
`;

const columns = [
  ["Permission", 131], ["Owner", 85], ["Group", 124], ["Size", 120],
  ["Last Modified", 227], ["Replication", 132], ["Block Size", 125], ["Name", 196],
];

const files = [
  ["-rw-r--r--", "ubuntu", "supergroup", "93.13 GB", "4/2/2016, 10:52:14 PM", "1", "256 MB", "intput16_100GB.txt"],
  ["-rw-r--r--", "ubuntu", "supergroup", "953.67 MB", "4/2/2016, 11:01:20 PM", "1", "256 MB", "intput16_1GB.txt"],
];

function HadoopPage() {
  return (
    <Page>
      <Navbar>
        <NavRow>
          <Brand>Hadoop</Brand>
          <NavLink>Overview</NavLink>
          <NavLink>Datanodes</NavLink>
          <NavLink>Snapshot</NavLink>
          <NavLink>Startup Progress</NavLink>
          <NavLink>Utilities <Caret /></NavLink>
        </NavRow>
      </Navbar>
      <Container>
        <PageHeader>
          <Heading>Browse Directory</Heading>
        </PageHeader>
        <PathForm>
          <PathInput>/input</PathInput>
          <GoButton>Go!</GoButton>
        </PathForm>
        <FileTable>
          <colgroup>{columns.map(([n, w]) => <Col key={n} $w={w} />)}</colgroup>
          <thead>
            <tr>{columns.map(([n]) => <th key={n}>{n}</th>)}</tr>
          </thead>
          <tbody>
            {files.map((row) => (
              <tr key={row[7]}>
                {row.map((value, i) => (
                  <td key={i}>{i === 7 ? <FileLink>{value}</FileLink> : value}</td>
                ))}
              </tr>
            ))}
          </tbody>
        </FileTable>
        <Footer>Hadoop, 2015.</Footer>
      </Container>
    </Page>
  );
}

/* ---------- top panel ---------- */

function Panel() {
  const c = "#dfdbd2";
  return (
    <TopPanel>
      <WindowTitle><FitText width={233}>Browsing HDFS - Google Chrome</FitText></WindowTitle>
      <Tray>
        <TrayItem $w={30}>
          <svg width="16" height="20" viewBox="0 0 16 20">
            <path d="M0 1.500 14 3v15L0 19.500z" fill="#1495ee" />
            <path d="M14 3l2-1v14l-2 2z" fill="#0a5fb0" />
            <circle cx="7" cy="10" r="5.500" fill="#e8f5ff" />
            <path d="M2.500 10 5 7.500v1.600h4V7.500l2.500 2.500L9 12.500v-1.600H5v1.600z" fill="#147fd8" />
          </svg>
        </TrayItem>
        <TrayItem $w={32}>
          <svg width="20" height="16" viewBox="0 0 20 16">
            <path d="M1 6c5-5 13-5 18 0" fill="none" stroke={c} strokeOpacity=".45" strokeWidth="1.800" />
            <path d="M3.500 8.500c4-4 9-4 13 0M6 11c2.500-2.500 5.500-2.500 8 0" fill="none" stroke={c} strokeWidth="1.700" />
            <path d="M10 15.500 7.800 13q2.200-1.500 4.400 0z" fill={c} />
          </svg>
        </TrayItem>
        <TrayItem $w={28}><Keyboard>En</Keyboard></TrayItem>
        <TrayItem $w={26}><FaBluetoothB size={15} color={c} /></TrayItem>
        <TrayItem $w={32}>
          <svg width="18" height="14" viewBox="0 0 18 14">
            <rect width="18" height="13" y=".5" fill={c} />
            <path d="M1 1.500l8 6.500 8-6.500M1 13l5.500-6M17 13l-5.500-6" fill="none" stroke="#45443f" strokeWidth="1.300" />
          </svg>
        </TrayItem>
        <TrayItem $w={36}>
          <svg width="24" height="14" viewBox="0 0 24 14">
            <rect x=".8" y="1.500" width="20" height="11" rx="1.500" fill="none" stroke={c} strokeWidth="1.300" />
            <path d="M21.500 4.500H24v5h-2.500z" fill={c} />
            <path d="M3 3.500h4v7H3z" fill={c} fillOpacity=".45" />
            <path d="M6 3.500l6 3V5l6 4.800-6-2.300v1.800z" fill={c} />
          </svg>
        </TrayItem>
        <TrayItem $w={32}>
          <svg width="20" height="16" viewBox="0 0 20 16">
            <path d="M0 5h3l4-3.500v13L3 11H0z" fill={c} />
            <path d="M9.500 5q2 3 0 6M12.500 3.500q3.500 4.500 0 9M15.500 2q5 6 0 12" fill="none" stroke={c} strokeWidth="1.500" />
          </svg>
        </TrayItem>
        <Clock><FitText width={61}>11:50 PM</FitText></Clock>
        <svg width="16" height="17" viewBox="0 0 16 17">
          <path d="M5 4.200a5.300 5.300 0 1 0 6 0" fill="none" stroke={c} strokeWidth="2" />
          <path d="M8 .5v8M0 8.500h2M14 8.500h2M2 3l1.700 1.700M14 3l-1.700 1.700M2.300 14.500 4 12.800M13.700 14.500 12 12.800M8 14v3" stroke={c} strokeWidth="2" />
        </svg>
      </Tray>
    </TopPanel>
  );
}

export default function App() {
  return (
    <Desktop>
      <GlobalStyle />
      <Panel />
      <Workspace>
        <Launcher />
        <Browser>
          <BrowserChrome />
          <HadoopPage />
        </Browser>
      </Workspace>
    </Desktop>
  );
}
